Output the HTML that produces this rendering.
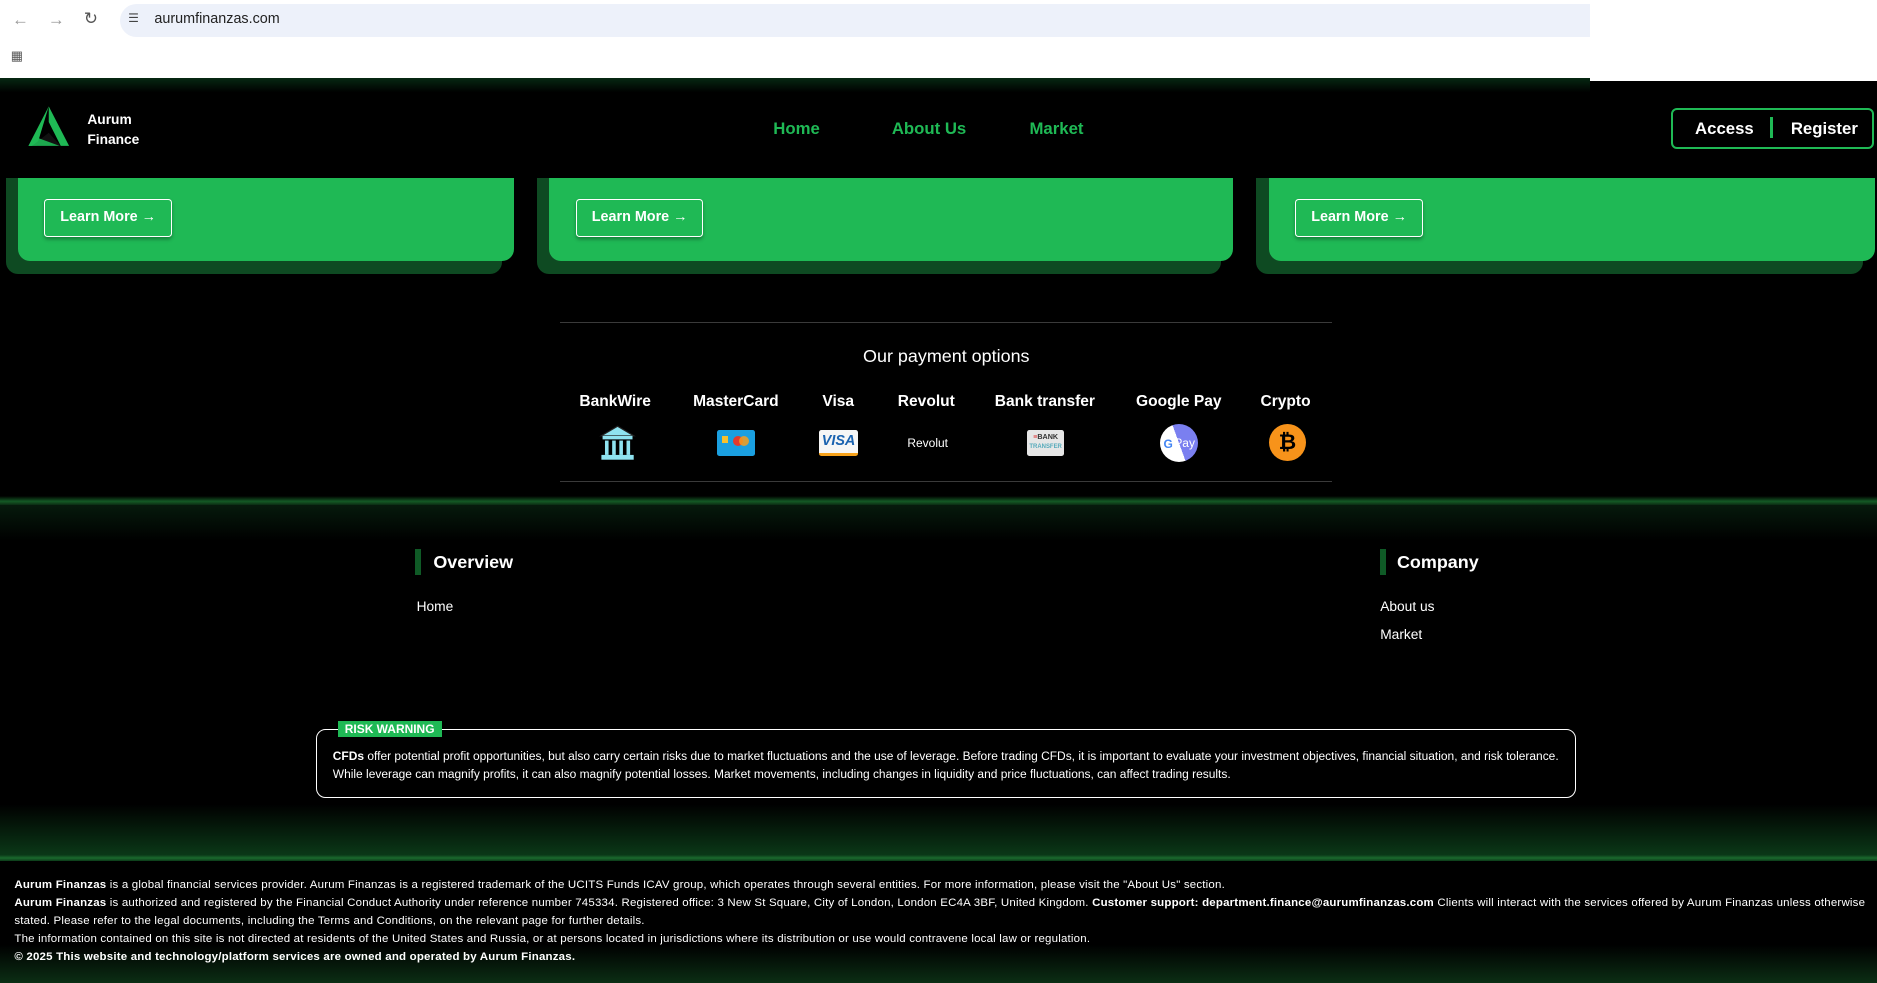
<!DOCTYPE html>
<html><head><meta charset="utf-8"><style>
html,body{margin:0;padding:0;background:#000;overflow:hidden}
#w{zoom:1.19707;width:1568px;height:821px;position:relative;font-family:"Liberation Sans",sans-serif;background:#000;overflow:hidden}
.a{position:absolute}
.t{position:absolute;white-space:nowrap}
</style></head><body><div id="w">
<div class="a" style="left:0;top:0;width:1568px;height:68px;background:#fff"></div>
<div class="a" style="left:100px;top:3px;width:1228px;height:28px;background:#edf1fa;border-radius:14px 0 0 14px"></div>
<div class="t" style="left:10px;top:8px;color:#999;font-size:14px">&#8592;</div>
<div class="t" style="left:40px;top:8px;color:#999;font-size:14px">&#8594;</div>
<div class="t" style="left:70px;top:7px;color:#555;font-size:14px">&#8635;</div>
<div class="t" style="left:107px;top:9px;color:#444;font-size:10px">&#9776;</div>
<div class="t" style="left:129px;top:9px;color:#222;font-size:12px">aurumfinanzas.com</div>
<div class="t" style="left:9px;top:40px;color:#555;font-size:11px">&#9638;</div>
<div class="a" style="left:0;top:65px;width:1328px;height:84px;background:linear-gradient(#062812,#000 12px)"></div>
<div class="a" style="left:1328px;top:70px;width:240px;height:79px;background:#000"></div>
<svg class="a" style="left:22px;top:87px" width="38" height="36" viewBox="0 0 38 36"><polygon points="19,2 36,35 29,35 19,15" fill="#1fb955"/><polygon points="19,2 2,35 9,35" fill="#1fb955"/><polygon points="5,35 19,24 29,35" fill="#111"/><polygon points="2,35 9,28 28,35" fill="#1fb955" opacity=".9"/></svg>
<div class="t" style="left:73px;top:92px;color:#fff;font-size:11.5px;font-weight:bold;line-height:17px">Aurum<br>Finance</div>
<div class="t" style="left:646px;top:99px;color:#1fb955;font-size:14px;font-weight:bold">Home</div>
<div class="t" style="left:745px;top:99px;color:#1fb955;font-size:14px;font-weight:bold">About Us</div>
<div class="t" style="left:860px;top:99px;color:#1fb955;font-size:14px;font-weight:bold">Market</div>
<div class="a" style="left:1396px;top:90px;width:166px;height:31px;border:2px solid #1fb955;border-radius:5px"></div>
<div class="t" style="left:1416px;top:99px;color:#fff;font-size:14px;font-weight:bold">Access</div>
<div class="a" style="left:1479px;top:98px;width:2px;height:17px;background:#1fb955"></div>
<div class="t" style="left:1496px;top:99px;color:#fff;font-size:14px;font-weight:bold">Register</div>
<div class="a" style="left:5px;top:149px;width:414px;height:80px;background:#0e4a22;border-radius:0 0 10px 10px"></div>
<div class="a" style="left:449px;top:149px;width:571px;height:80px;background:#0e4a22;border-radius:0 0 10px 10px"></div>
<div class="a" style="left:1049px;top:149px;width:507px;height:80px;background:#0e4a22;border-radius:0 0 10px 10px"></div>
<div class="a" style="left:15px;top:149px;width:414px;height:69px;background:#1fb955;border-radius:0 0 10px 10px"></div>
<div class="a" style="left:459px;top:149px;width:571px;height:69px;background:#1fb955;border-radius:0 0 10px 10px"></div>
<div class="a" style="left:1060px;top:149px;width:506px;height:69px;background:#1fb955;border-radius:0 0 10px 10px"></div>
<div class="a" style="left:37px;top:166px;width:105px;height:30px;border:1px solid #fff;border-radius:3px;color:#fff;font-size:12px;font-weight:bold;line-height:30px;text-align:center;box-shadow:0 2px 3px rgba(0,0,0,.3)">Learn More &#8594;</div>
<div class="a" style="left:481px;top:166px;width:105px;height:30px;border:1px solid #fff;border-radius:3px;color:#fff;font-size:12px;font-weight:bold;line-height:30px;text-align:center;box-shadow:0 2px 3px rgba(0,0,0,.3)">Learn More &#8594;</div>
<div class="a" style="left:1082px;top:166px;width:105px;height:30px;border:1px solid #fff;border-radius:3px;color:#fff;font-size:12px;font-weight:bold;line-height:30px;text-align:center;box-shadow:0 2px 3px rgba(0,0,0,.3)">Learn More &#8594;</div>
<div class="a" style="left:468px;top:269px;width:645px;height:1px;background:#3a3a3a"></div>
<div class="a" style="left:468px;top:402px;width:645px;height:1px;background:#3a3a3a"></div>
<div class="t" style="left:468px;width:645px;text-align:center;top:289px;color:#fff;font-size:15px">Our payment options</div>
<div class="t" style="left:484px;top:328px;color:#fff;font-size:13px;font-weight:bold">BankWire</div>
<div class="t" style="left:579px;top:328px;color:#fff;font-size:13px;font-weight:bold">MasterCard</div>
<div class="t" style="left:687px;top:328px;color:#fff;font-size:13px;font-weight:bold">Visa</div>
<div class="t" style="left:750px;top:328px;color:#fff;font-size:13px;font-weight:bold">Revolut</div>
<div class="t" style="left:831px;top:328px;color:#fff;font-size:13px;font-weight:bold">Bank transfer</div>
<div class="t" style="left:949px;top:328px;color:#fff;font-size:13px;font-weight:bold">Google Pay</div>
<div class="t" style="left:1053px;top:328px;color:#fff;font-size:13px;font-weight:bold">Crypto</div>
<svg class="a" style="left:500px;top:355px" width="31" height="30" viewBox="0 0 31 30"><polygon points="15.5,1 29,9 2,9" fill="#8fe3f0" stroke="#222"/><rect x="3" y="9" width="25" height="3" fill="#8fe3f0"/><rect x="5" y="13" width="3" height="12" fill="#8fe3f0"/><rect x="11" y="13" width="3" height="12" fill="#8fe3f0"/><rect x="17" y="13" width="3" height="12" fill="#8fe3f0"/><rect x="23" y="13" width="3" height="12" fill="#8fe3f0"/><rect x="2" y="25" width="27" height="4" fill="#8fe3f0"/></svg>
<div class="a" style="left:599px;top:359px;width:32px;height:22px;background:#1a9fe0;border-radius:2px"></div>
<div class="a" style="left:603px;top:364px;width:5px;height:6px;background:#f7c12d"></div>
<div class="a" style="left:612px;top:364px;width:9px;height:9px;background:#e53a2c;border-radius:50%"></div>
<div class="a" style="left:617px;top:364px;width:9px;height:9px;background:#f79e1b;border-radius:50%;opacity:.85"></div>
<div class="a" style="left:684px;top:359px;width:33px;height:22px;background:#f6f6f6;border-radius:2px;border-bottom:3px solid #f7a21b;box-sizing:border-box;color:#1b63b0;font-weight:bold;font-style:italic;font-size:12px;text-align:center;line-height:20px">VISA</div>
<div class="t" style="left:758px;top:364px;color:#fff;font-size:10px">Revolut</div>
<div class="a" style="left:858px;top:359px;width:31px;height:22px;background:#e6e6e6;border-radius:2px;color:#333;font-size:6px;font-weight:bold;text-align:center;line-height:7px;padding-top:3px;box-sizing:border-box;overflow:hidden"><span style="color:#d33">&#8801;</span>BANK<br><span style="color:#5ab;font-size:5px">TRANSFER</span></div>
<div class="a" style="left:969px;top:354px;width:32px;height:32px;border-radius:50%;background:linear-gradient(70deg,#fff 50%,#7a7ff0 50%)"></div>
<div class="t" style="left:972px;top:365px;font-size:10px;color:#4285f4;font-weight:bold">G</div>
<div class="t" style="left:981px;top:364px;font-size:10px;color:#fff">Pay</div>
<div class="a" style="left:1060px;top:354px;width:31px;height:31px;border-radius:50%;background:#f7931a;color:#000;font-weight:bold;font-size:18px;text-align:center;line-height:31px">&#8383;</div>
<div class="a" style="left:0;top:414px;width:1568px;height:8px;background:linear-gradient(#000,#145a25 60%,#0b2b13)"></div>
<div class="a" style="left:0;top:422px;width:1568px;height:294px;background:linear-gradient(#061a0c,#000 30px,#000 250px,#0b3a18)"></div>
<div class="a" style="left:347px;top:459px;width:5px;height:21px;background:#0f5a26"></div>
<div class="t" style="left:362px;top:461px;color:#fff;font-size:15px;font-weight:bold">Overview</div>
<div class="t" style="left:348px;top:500px;color:#fff;font-size:11.5px">Home</div>
<div class="a" style="left:1153px;top:459px;width:5px;height:21px;background:#0f5a26"></div>
<div class="t" style="left:1167px;top:461px;color:#fff;font-size:15px;font-weight:bold">Company</div>
<div class="t" style="left:1153px;top:500px;color:#fff;font-size:11.5px">About us</div>
<div class="t" style="left:1153px;top:524px;color:#fff;font-size:11.5px">Market</div>
<div class="a" style="left:264px;top:609px;width:1051px;height:56px;border:1px solid #fff;border-radius:8px"></div>
<div class="t" style="left:282px;top:602px;width:87px;height:14px;background:#1fb955;color:#fff;font-size:10px;font-weight:bold;line-height:14px;text-align:center">RISK WARNING</div>
<div class="t" style="left:278px;top:625px;color:#fff;font-size:10px;line-height:15px"><b>CFDs</b> offer potential profit opportunities, but also carry certain risks due to market fluctuations and the use of leverage. Before trading CFDs, it is important to evaluate your investment objectives, financial situation, and risk tolerance.<br>While leverage can magnify profits, it can also magnify potential losses. Market movements, including changes in liquidity and price fluctuations, can affect trading results.</div>
<div class="a" style="left:0;top:714px;width:1568px;height:5px;background:linear-gradient(#0c3a18,#1a6a2e,#0c3a18)"></div>
<div class="a" style="left:0;top:719px;width:1568px;height:102px;background:linear-gradient(#000 70px,#0b2e14)"></div>
<div class="t" style="left:12px;top:733px;color:#fff;font-size:9.6px;line-height:15px;letter-spacing:.16px"><b>Aurum Finanzas</b> is a global financial services provider. Aurum Finanzas is a registered trademark of the UCITS Funds ICAV group, which operates through several entities. For more information, please visit the "About Us" section.<br><b>Aurum Finanzas</b> is authorized and registered by the Financial Conduct Authority under reference number 745334. Registered office: 3 New St Square, City of London, London EC4A 3BF, United Kingdom. <b>Customer support: department.finance@aurumfinanzas.com</b> Clients will interact with the services offered by Aurum Finanzas unless otherwise<br>stated. Please refer to the legal documents, including the Terms and Conditions, on the relevant page for further details.<br>The information contained on this site is not directed at residents of the United States and Russia, or at persons located in jurisdictions where its distribution or use would contravene local law or regulation.<br><b>© 2025 This website and technology/platform services are owned and operated by Aurum Finanzas.</b></div>
</div></body></html>
